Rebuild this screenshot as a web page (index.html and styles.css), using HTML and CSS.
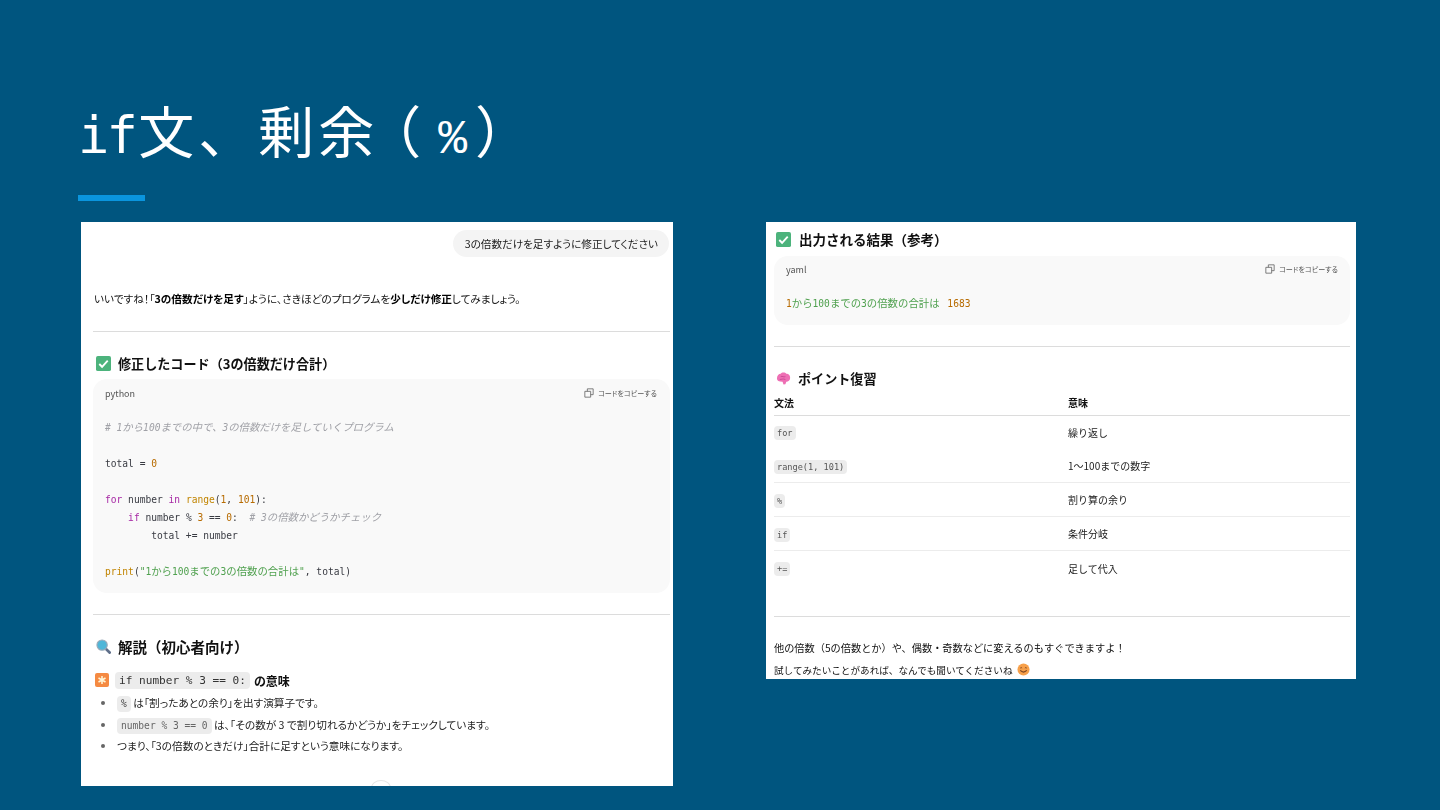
FILE: index.html
```html
<!DOCTYPE html>
<html lang="ja">
<head>
<meta charset="utf-8">
<title>if文、剰余（％）</title>
<link rel="stylesheet" href="styles.css">
</head>
<body>
<main class="slide">
  <h1 class="title"><span class="tl">if</span>文、剰余<span class="pa">（</span><span class="tp">%</span>）</h1>
  <div class="rule"></div>
  <div class="shots">
    <section class="shot shot-left">
      <div class="bubble-row"><div class="bubble">3の倍数だけを足すように修正してください</div></div>
      <p class="intro">いいですね！「<b>3の倍数だけを足す</b>」ように、さきほどのプログラムを<b>少しだけ修正</b>してみましょう。</p>
      <hr class="sep sep-a">
      <h3 class="head">
        <svg class="emoji" viewBox="0 0 16 16"><rect width="16" height="16" rx="2" fill="#4cb37c"/><path d="M3.500 8.500l3 3 6-6.500" fill="none" stroke="#fff" stroke-width="2"/></svg>
        修正したコード（3の倍数だけ合計）
      </h3>
      <div class="code code-main">
        <div class="code-top"><span>python</span><span class="copy"><svg class="copy-ico" viewBox="0 0 12 12"><path d="M1 4h7v7H1zM4 4V1h7v7H8" fill="none" stroke="#666" stroke-width="1"/></svg>コードをコピーする</span></div>
<pre class="code-body"><i class="c"># 1<span class="j">から</span>100<span class="j">までの中で、</span>3<span class="j">の倍数だけを足していくプログラム</span></i>

total = <span class="n">0</span>

<span class="k">for</span> number <span class="k">in</span> <span class="f">range</span>(<span class="n">1</span>, <span class="n">101</span>):
    <span class="k">if</span> number % <span class="n">3</span> == <span class="n">0</span>:  <i class="c"># 3<span class="j">の倍数かどうかチェック</span></i>
        total += number

<span class="f">print</span>(<span class="s">"1<span class="j">から</span>100<span class="j">までの</span>3<span class="j">の倍数の合計は</span>"</span>, total)</pre>
      </div>
      <hr class="sep sep-b">
      <h3 class="head head-b">
        <svg class="emoji" viewBox="0 0 16 16"><path d="M10 10l4.500 4.500" stroke="#5f6f8a" stroke-width="3" stroke-linecap="round"/><circle cx="6.500" cy="6.500" r="5.500" fill="#4fb6d8" stroke="#9aa9b8" stroke-width="1.200"/></svg>
        解説（初心者向け）
      </h3>
      <h4 class="subhead">
        <svg class="emoji emoji-s" viewBox="0 0 14 14"><rect width="14" height="14" rx="2" fill="#f58a42"/><path d="M7 3v8M3.500 5l7 4M10.500 5l-7 4" stroke="#fff6d8" stroke-width="1.500"/></svg>
        <code class="tag tag-big">if number % 3 == 0:</code><span>の意味</span>
      </h4>
      <ul class="list">
        <li><code class="tag">%</code> は「割ったあとの余り」を出す演算子です。</li>
        <li><code class="tag tag-small">number % 3 == 0</code> は、「その数が 3 で割り切れるかどうか」をチェックしています。</li>
        <li>つまり、「3の倍数のときだけ」合計に足すという意味になります。</li>
      </ul>
      <span class="scroll-peek"></span>
    </section>

    <section class="shot shot-right">
      <h3 class="head head-r">
        <svg class="emoji" viewBox="0 0 16 16"><rect width="16" height="16" rx="2" fill="#4cb37c"/><path d="M3.500 8.500l3 3 6-6.500" fill="none" stroke="#fff" stroke-width="2"/></svg>
        出力される結果（参考）
      </h3>
      <div class="code code-out">
        <div class="code-top"><span>yaml</span><span class="copy"><svg class="copy-ico" viewBox="0 0 12 12"><path d="M1 4h7v7H1zM4 4V1h7v7H8" fill="none" stroke="#666" stroke-width="1"/></svg>コードをコピーする</span></div>
        <pre class="code-body code-body-out"><span class="n">1</span><span class="s"><span class="j">から</span>100<span class="j">までの</span>3<span class="j">の倍数の合計は</span></span> <span class="n num-out">1683</span></pre>
      </div>
      <hr class="sep sep-c">
      <h3 class="head head-p">
        <svg class="emoji" viewBox="0 0 16 16"><path d="M1 8c0-3 2-5 4-5 1-2 5-2 6 0 3 0 4.500 2.500 4 5 0 2-2 3.500-4 3.500l-1 2.500-2 .5-1-3C3 11.500 1 10.500 1 8z" fill="#ee6fb4"/><path d="M5 6c2-1 3 1 5 0M4 9c2 0 3-1 6 0" stroke="#c94a94" fill="none"/></svg>
        ポイント復習
      </h3>
      <div class="table">
        <div class="tr th"><div>文法</div><div>意味</div></div>
        <div class="tr tr-a"><div><code class="tag tag-t">for</code></div><div>繰り返し</div></div>
        <div class="tr"><div><code class="tag tag-t">range(1, 101)</code></div><div>1〜100までの数字</div></div>
        <div class="tr"><div><code class="tag tag-t">%</code></div><div>割り算の余り</div></div>
        <div class="tr"><div><code class="tag tag-t">if</code></div><div>条件分岐</div></div>
        <div class="tr tr-z"><div><code class="tag tag-t">+=</code></div><div>足して代入</div></div>
      </div>
      <hr class="sep sep-d">
      <p class="outro outro-a">他の倍数（5の倍数とか）や、偶数・奇数などに変えるのもすぐできますよ！</p>
      <p class="outro">試してみたいことがあれば、なんでも聞いてくださいね
        <svg class="smile" viewBox="0 0 14 14"><circle cx="7" cy="7" r="6.500" fill="#f7a04a"/><path d="M3.500 5.500q1-1.200 2 0M8.500 5.500q1-1.200 2 0" stroke="#7a4320" fill="none"/><path d="M3.500 8q3.500 3.500 7 0" stroke="#7a4320" fill="none" stroke-width="1.200"/></svg>
      </p>
    </section>
  </div>
</main>
</body>
</html>
```

FILE: styles.css
```css
* { box-sizing: border-box; }
html, body { margin: 0; padding: 0; }
body { width: 1440px; height: 810px; overflow: hidden; background: #00557f; }

.slide {
  width: 1440px;
  height: 810px;
  padding: 93px 0 0 78px;
  display: flex;
  flex-direction: column;
  font-family: "Noto Sans CJK JP", sans-serif;
  color: #111;
}
.title {
  margin: 0;
  height: 76px;
  font: 400 56px/72px "Noto Sans CJK JP", sans-serif;
  letter-spacing: 4px;
  color: #fff;
  white-space: nowrap;
}
.tl { font: 400 52px/72px "DejaVu Sans Mono", monospace; letter-spacing: -2.700px; margin-right: 3px; }
.pa { margin-left: -13px; }
.tp { font: 400 48px/72px "Liberation Mono", monospace; letter-spacing: 0; margin: 0 8px 0 13px; }
.rule { width: 67px; height: 6px; margin-top: 26px; background: #0a95de; }
.shots { display: flex; align-items: flex-start; margin: 21px 0 0 3px; gap: 93px; }

.shot { position: relative; background: #fff; overflow: hidden; font-size: 10.650px; filter: blur(0.3px); }
.shot-left { width: 592px; height: 564px; padding: 8px 3px 0 12px; font-feature-settings: "palt"; }
.shot-right { width: 590px; height: 457px; padding: 8px 6px 0 8px; }

.bubble-row { display: flex; justify-content: flex-end; padding-right: 1px; }
.bubble { height: 27px; line-height: 27px; padding: 0 11px 0 12px; border-radius: 14px; background: #f4f4f4; color: #222; font-size: 10.600px; }
.intro { margin: 32px 0 0 1px; height: 20px; line-height: 20px; color: #111; }
b { font-weight: 700; color: #000; }

.sep { border: 0; border-top: 1px solid #dcdcdc; margin: 0; }
.sep-a { margin-top: 22px; }
.sep-b { margin-top: 21px; }
.sep-c { margin-top: 21px; }
.sep-d { margin-top: 31px; }

.head { display: flex; align-items: center; gap: 7px; margin: 0; height: 20px; font-size: 13.100px; font-weight: 700; color: #111; font-feature-settings: normal; }
.shot-left > .head { margin-top: 21px; margin-left: 3px; }
.shot-left > .head-b { margin-top: 21px; font-size: 14.500px; }
.head-r { margin-left: 2px; margin-top: -1px; gap: 8px; font-size: 13.500px; }
.head-p { margin-top: 21px; margin-left: 2px; }
.emoji { width: 15px; height: 15px; flex: none; }
.emoji-s { width: 14px; height: 14px; }

.code { background: #f9f9f9; border-radius: 14px; }
.code-main { height: 214px; margin-top: 6px; padding: 7px 13px 0 12px; }
.code-out { height: 69px; margin-top: 7px; padding: 6px 12px 0 12px; }
.code-top { display: flex; justify-content: space-between; align-items: center; height: 14px; font-size: 9px; color: #555; }
.copy { display: flex; align-items: center; gap: 4px; font-size: 7.100px; font-feature-settings: "palt"; }
.copy-ico { width: 10px; height: 10px; }

.code-body { margin: 19px 0 0; font: 9.600px/18px "DejaVu Sans Mono", "Noto Sans CJK JP", monospace; color: #383a42; font-feature-settings: normal; }
.code-body-out { margin-top: 19px; }
.num-out { margin-left: 2px; }
.j { font-size: 10.400px; line-height: 0; font-family: "Noto Sans CJK JP", sans-serif; }
.c { color: #a0a1a7; }
.n { color: #b76b01; }
.k { color: #a626a4; }
.f { color: #c18401; }
.s { color: #50a14f; }

.subhead { display: flex; align-items: center; gap: 4px; margin: 14px 0 0 2px; height: 20px; font-size: 12px; font-weight: 700; color: #111; }
.subhead .emoji { margin-right: 2px; }
.tag { display: inline-block; font: 9.600px/16px "DejaVu Sans Mono", monospace; padding: 0 4px; border-radius: 4px; background: #ececec; color: #444; }
.tag-big { font-weight: 400; font-size: 11.100px; line-height: 17px; padding: 0 4px; color: #333; }
.tag-small { color: #666; }
.tag-t { font-size: 8.600px; line-height: 14px; padding: 0 3px; color: #555; }

.list { margin: 2px 0 0; padding: 0 0 0 8px; color: #222; list-style: none; }
.list li { height: 21.500px; line-height: 21.500px; }
.list li::before { content: ""; display: inline-block; width: 4px; height: 4px; margin-right: 12px; border-radius: 50%; background: #666; vertical-align: 2px; }

.scroll-peek { position: absolute; left: 290px; bottom: -10px; width: 20px; height: 16px; border: 1px solid #e6e6e6; border-radius: 50%; }

.table { margin-top: 0; font-size: 10px; color: #222; }
.tr { display: grid; grid-template-columns: 294px 1fr; align-items: center; height: 34px; border-bottom: 1px solid #ececec; }
.th { height: 29px; margin-top: -1px; padding-top: 2px; font-weight: 700; color: #111; border-bottom-color: #dcdcdc; }
.tr-a { height: 33px; border-bottom-color: transparent; }
.tr-z { border-bottom: 0; }

.outro { margin: 0; height: 22px; line-height: 22px; color: #111; font-size: 9.600px; }
.outro-a { font-size: 10.200px; }
.sep-d + .outro { margin-top: 20px; }
.smile { width: 13px; height: 13px; vertical-align: -2px; margin-left: 2px; }
```
